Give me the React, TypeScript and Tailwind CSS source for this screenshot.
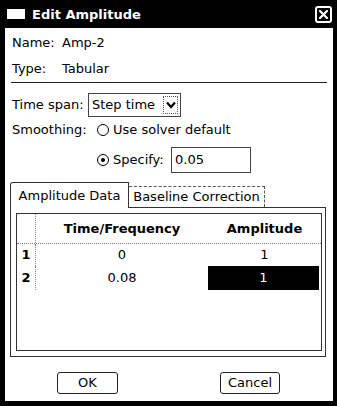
export default function App() {
  const font = { fontFamily: '"DejaVu Sans", Verdana, sans-serif' };
  return (
    <div className="flex h-[406px] w-[337px] flex-col bg-black text-[13px] text-black" style={font}>
      {/* title bar */}
      <div className="flex h-[28px] shrink-0 items-center pl-[7px] pr-[5px]">
        <div className="h-[10px] w-[18px] bg-white" />
        <span className="ml-[7px] text-[13px] font-bold leading-none text-white">Edit Amplitude</span>
        <div className="ml-auto flex h-[17px] w-[17px] items-center justify-center rounded-[3px] border-2 border-white">
          <svg width="9" height="9" viewBox="0 0 9 9">
            <path d="M1 1 L8 8 M8 1 L1 8" stroke="white" strokeWidth="2.2" strokeLinecap="square" />
          </svg>
        </div>
      </div>

      {/* body */}
      <div className="mb-[5px] ml-[5px] mr-[4px] flex flex-1 flex-col bg-white">
        <div className="pl-[7px] pt-[2px]">
          <div className="flex h-[26px] items-center">
            <span className="w-[50px]">Name:</span>
            <span>Amp-2</span>
          </div>
          <div className="flex h-[26px] items-center">
            <span className="w-[50px]">Type:</span>
            <span>Tabular</span>
          </div>
        </div>
        <div className="mx-[6px] border-t border-[#222]" />

        <div className="mt-[10px] flex h-[24px] items-center pl-[7px]">
          <span className="w-[76px]">Time span:</span>
          <div className="flex h-[24px] w-[93px] items-center border border-[#444] pl-[3px] pr-[2px]">
            <span>Step time</span>
            <div className="ml-auto flex h-[18px] w-[15px] items-center justify-center border border-dotted border-[#555]">
              <svg width="10" height="8" viewBox="0 0 10 8">
                <path d="M1 1.5 L5 6 L9 1.5" fill="none" stroke="black" strokeWidth="2.2" />
              </svg>
            </div>
          </div>
        </div>

        <div className="flex h-[26px] items-center pl-[7px]">
          <span className="w-[85px]">Smoothing:</span>
          <div className="h-[12px] w-[12px] rounded-full border-[1.5px] border-black" />
          <span className="ml-[4px]">Use solver default</span>
        </div>

        <div className="mt-[4px] flex h-[26px] items-center pl-[92px]">
          <div className="flex h-[12px] w-[12px] items-center justify-center rounded-full border-[1.5px] border-black">
            <div className="h-[4px] w-[4px] rounded-full bg-black" />
          </div>
          <span className="ml-[4px] w-[58px]">Specify:</span>
          <div className="flex h-[26px] w-[80px] items-center border border-[#444] pl-[3px]">0.05</div>
        </div>

        {/* tabs */}
        <div className="mx-[5px] mr-[7px] mt-[9px] flex items-end">
          <div className="relative z-10 -mb-px flex h-[26px] w-[119px] items-center justify-center rounded-tl-[3px] border border-b-0 border-[#333] bg-white">
            Amplitude Data
          </div>
          <div className="flex h-[21px] w-[136px] items-center justify-center border border-b-0 border-l-0 border-dashed border-[#555]">
            Baseline Correction
          </div>
        </div>
        <div className="mx-[5px] mr-[7px] h-[150px] border border-[#333] p-[5px] pr-[3px]">
          <div className="h-full border border-[#333]">
            <div className="flex h-[30px] items-center border-b border-dotted border-[#777] font-bold">
              <div className="h-full w-[19px] border-r border-dotted border-[#888]" />
              <div className="w-[172px] text-center">Time/Frequency</div>
              <div className="flex-1 text-center">Amplitude</div>
            </div>
            <div className="flex h-[22px] items-center">
              <div className="flex h-full w-[19px] items-center justify-center border-r border-dotted border-[#888] font-bold">1</div>
              <div className="w-[172px] text-center">0</div>
              <div className="flex-1 text-center">1</div>
            </div>
            <div className="flex h-[24px] items-center">
              <div className="flex h-full w-[19px] items-center justify-center border-r border-dotted border-[#888] font-bold">2</div>
              <div className="w-[172px] text-center">0.08</div>
              <div className="mr-[2px] flex h-full flex-1 items-center justify-center bg-black text-white">1</div>
            </div>
          </div>
        </div>

        {/* buttons */}
        <div className="mt-[15px] flex pl-[52px]">
          <div className="flex h-[22px] w-[61px] items-center justify-center rounded-[3px] border-[1.5px] border-[#222]">
            OK
          </div>
          <div className="ml-[102px] flex h-[22px] w-[60px] items-center justify-center rounded-[3px] border-[1.5px] border-[#222]">
            Cancel
          </div>
        </div>
      </div>
    </div>
  );
}
